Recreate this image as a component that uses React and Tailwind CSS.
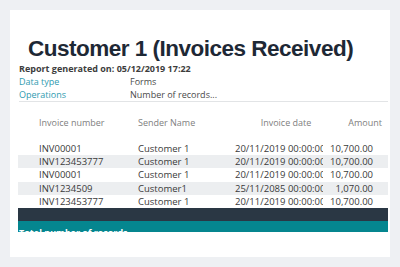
import React from 'react';

const rows = [
  { no: 'INV00001', sender: 'Customer 1', date: '20/11/2019 00:00:00', amount: '10,700.00' },
  { no: 'INV123453777', sender: 'Customer 1', date: '20/11/2019 00:00:00', amount: '10,700.00' },
  { no: 'INV00001', sender: 'Customer 1', date: '20/11/2019 00:00:00', amount: '10,700.00' },
  { no: 'INV1234509', sender: 'Customer1', date: '25/11/2085 00:00:00', amount: '1,070.00' },
  { no: 'INV123453777', sender: 'Customer 1', date: '20/11/2019 00:00:00', amount: '10,700.00' },
];

const cols = 'grid grid-cols-[120px_97px_88px_1fr]';

export default function App() {
  return (
    <div className="w-[400px] h-[267px] bg-[#eef0f3] pt-[10px] pl-[10px] overflow-hidden font-['Open_Sans',sans-serif]">
      <div className="w-[380px] h-[247px] bg-white pl-[8px] pr-[2px] pt-[28px] flex flex-col">
        <h1 className="pl-[10px] text-[22.5px] leading-[22px] font-bold tracking-[-0.5px] text-[#1e2835] font-['Liberation_Sans',Arial,sans-serif] whitespace-nowrap">
          Customer 1 (Invoices Received)
        </h1>

        <div className="pl-[1px] mt-[2px]">
          <p className="text-[9px] leading-[13px] font-bold text-[#3d3d3d] whitespace-nowrap">
            Report generated on: 05/12/2019 17:22
          </p>
          <div className="grid grid-cols-[111px_1fr] text-[9px] leading-[13px]">
            <span className="text-[#2f9bb0]">Data type</span>
            <span className="text-[#4a4a4a]">Forms</span>
            <span className="text-[#2f9bb0]">Operations</span>
            <span className="text-[#4a4a4a]">Number of records...</span>
          </div>
          <div className="border-b border-[#e2e4e6]" />
        </div>

        <div className={`${cols} mt-[14px] text-[9px] leading-[13px] text-[#808080]`}>
          <span className="pl-[21px]">Invoice number</span>
          <span>Sender Name</span>
          <span className="text-center pl-[14px]">Invoice date</span>
          <span className="text-right pr-[6px]">Amount</span>
        </div>

        <div className="mt-[13px] text-[9.5px] text-[#3a3a3a]">
          {rows.map((r, i) => (
            <div
              key={i}
              className={`${cols} h-[13.2px] items-center leading-[13px] ${i % 2 === 1 ? 'bg-[#eceef0]' : ''}`}
            >
              <span className="pl-[21px] whitespace-nowrap">{r.no}</span>
              <span className="whitespace-nowrap">{r.sender}</span>
              <span className="whitespace-nowrap overflow-hidden">{r.date}</span>
              <span className="text-right pr-[15px] whitespace-nowrap">{r.amount}</span>
            </div>
          ))}
        </div>

        <div className="h-[13px] bg-[#2a3744]" />
        <div className="h-[11px] bg-[#05868f] overflow-hidden pl-[1px]">
          <p className="pt-[7px] text-[9px] leading-[10px] font-bold text-white whitespace-nowrap">
            Total number of records
          </p>
        </div>
      </div>
    </div>
  );
}
